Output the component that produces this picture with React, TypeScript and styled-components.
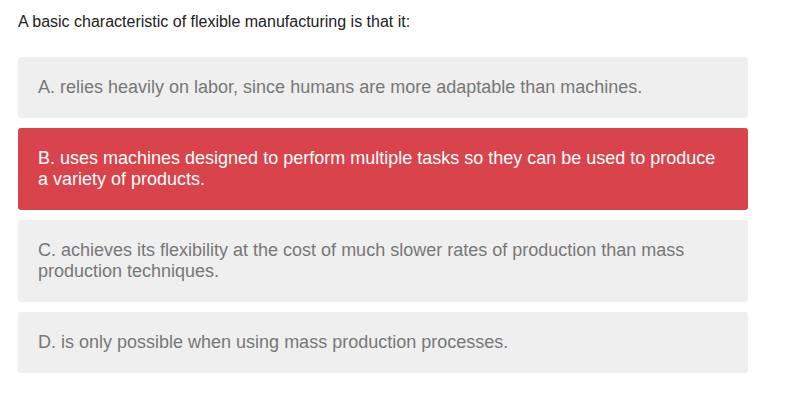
import React from "react";
import styled, { createGlobalStyle } from "styled-components";

const Global = createGlobalStyle`
  html, body { margin: 0; padding: 0; background: #ffffff; }
  body { font-family: "Liberation Sans", Arial, sans-serif; }
`;

const Page = styled.div`
  padding: 13px 51px 0 18px;
  width: 730px;
`;

const Question = styled.p`
  margin: 0 0 26px 0;
  font-size: 16px;
  line-height: 18px;
  color: #222222;
`;

const Options = styled.div`
  display: flex;
  flex-direction: column;
  gap: 10px;
`;

const Option = styled.div<{ $selected?: boolean }>`
  padding: 20px 30px 20px 20px;
  border-radius: 3px;
  font-size: 18px;
  line-height: 21px;
  background: ${(p) => (p.$selected ? "#d9434b" : "#efefef")};
  color: ${(p) => (p.$selected ? "#ffffff" : "#777777")};
`;

const options = [
  { text: "A. relies heavily on labor, since humans are more adaptable than machines.", selected: false },
  { text: "B. uses machines designed to perform multiple tasks so they can be used to produce a variety of products.", selected: true },
  { text: "C. achieves its flexibility at the cost of much slower rates of production than mass production techniques.", selected: false },
  { text: "D. is only possible when using mass production processes.", selected: false },
];

export default function App() {
  return (
    <>
      <Global />
      <Page>
        <Question>A basic characteristic of flexible manufacturing is that it:</Question>
        <Options>
          {options.map((o) => (
            <Option key={o.text} $selected={o.selected}>
              {o.text}
            </Option>
          ))}
        </Options>
      </Page>
    </>
  );
}
